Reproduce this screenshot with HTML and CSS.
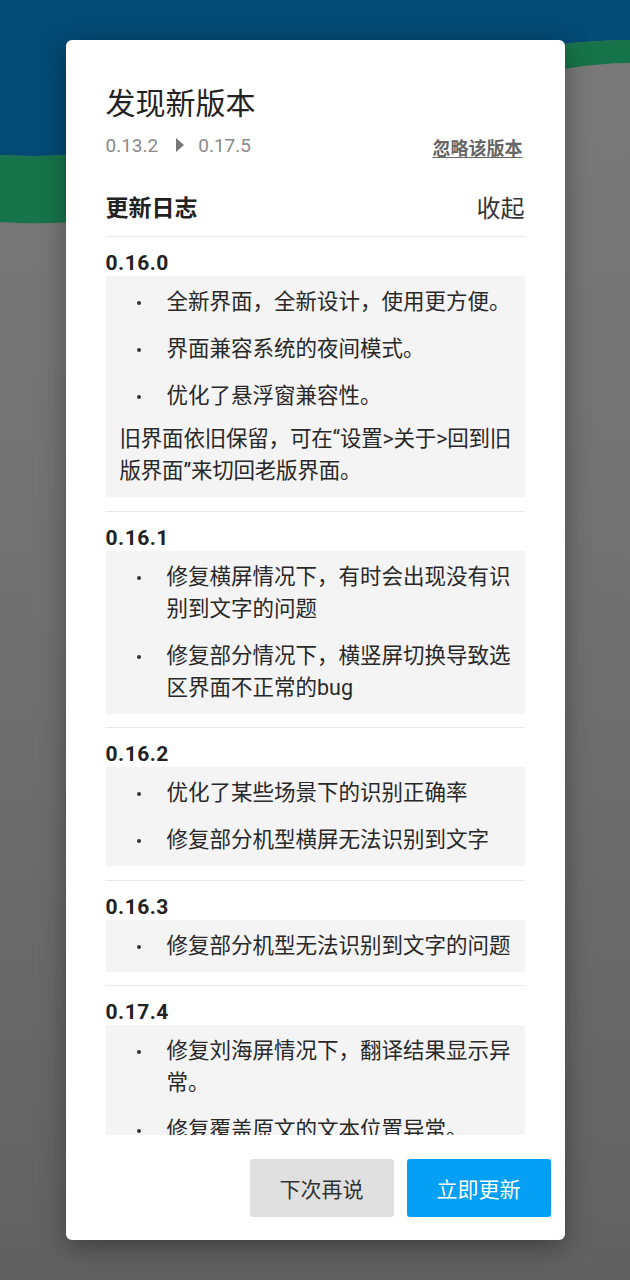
FILE: index.html
```html
<!DOCTYPE html>
<html lang="zh-CN">
<head>
    <meta charset="UTF-8">
    <meta name="viewport" content="width=device-width, initial-scale=1.0">
    <title>发现新版本</title>
    <link rel="stylesheet" href="styles.css">
</head>
<body>
    <!-- app background behind the dim overlay -->
    <svg class="backdrop" width="630" height="260" viewBox="0 0 630 260">
        <path d="M0 0 H630 V40 C420 40 250 168 0 155 Z" fill="#034a74"/>
        <path d="M0 155 C250 168 420 40 630 40 V63 C430 63 260 240 0 222 Z" fill="#17744a"/>
    </svg>

    <div class="dialog">
        <div class="dialog-head">
            <h1>发现新版本</h1>
            <div class="version-row">
                <span class="version">0.13.2</span>
                <span class="arrow"></span>
                <span class="version">0.17.5</span>
                <a class="ignore" href="#">忽略该版本</a>
            </div>
            <div class="log-head">
                <span class="log-title">更新日志</span>
                <span class="log-toggle">收起</span>
            </div>
        </div>

        <div class="log-list">
            <div class="entry">
                <div class="entry-version">0.16.0</div>
                <div class="entry-box">
                    <ul>
                        <li>全新界面，全新设计，使用更方便。</li>
                        <li>界面兼容系统的夜间模式。</li>
                        <li>优化了悬浮窗兼容性。</li>
                    </ul>
                    <p>旧界面依旧保留，可在“设置&gt;关于&gt;回到旧<br>版界面”来切回老版界面。</p>
                </div>
            </div>
            <div class="entry">
                <div class="entry-version">0.16.1</div>
                <div class="entry-box">
                    <ul>
                        <li>修复横屏情况下，有时会出现没有识别到文字的问题</li>
                        <li>修复部分情况下，横竖屏切换导致选区界面不正常的bug</li>
                    </ul>
                </div>
            </div>
            <div class="entry">
                <div class="entry-version">0.16.2</div>
                <div class="entry-box">
                    <ul>
                        <li>优化了某些场景下的识别正确率</li>
                        <li>修复部分机型横屏无法识别到文字</li>
                    </ul>
                </div>
            </div>
            <div class="entry">
                <div class="entry-version">0.16.3</div>
                <div class="entry-box">
                    <ul>
                        <li>修复部分机型无法识别到文字的问题</li>
                    </ul>
                </div>
            </div>
            <div class="entry">
                <div class="entry-version">0.17.4</div>
                <div class="entry-box">
                    <ul>
                        <li>修复刘海屏情况下，翻译结果显示异常。</li>
                        <li>修复覆盖原文的文本位置异常。</li>
                    </ul>
                </div>
            </div>
        </div>

        <div class="dialog-foot">
            <button class="btn btn-later">下次再说</button>
            <button class="btn btn-update">立即更新</button>
        </div>
    </div>
</body>
</html>
```

FILE: styles.css
```css
body {
    margin: 0;
    height: 1280px;
    overflow: hidden;
    position: relative;
    font-family: Roboto, "Noto Sans CJK SC", sans-serif;
    color: #333;
    text-spacing-trim: space-all;
    background: linear-gradient(180deg, #7a7a7a 0%, #707070 50%, #616161 100%);
}

.backdrop {
    position: absolute;
    top: 0;
    left: 0;
    z-index: 0;
}

.dialog {
    position: relative;
    z-index: 1;
    width: 499px;
    height: 1200px;
    margin: 40px auto 0;
    background: #fff;
    border-radius: 6px;
    box-shadow: 0 8px 26px rgba(0, 0, 0, 0.35);
    display: flex;
    flex-direction: column;
    overflow: hidden;
}

.dialog-head {
    padding: 44px 40px 0;
}

h1 {
    margin: 0;
    font-size: 30px;
    line-height: 40px;
    font-weight: 400;
    color: #222;
}

.version-row {
    display: flex;
    align-items: center;
    height: 30px;
    margin-top: 6px;
}

.version {
    font-size: 19px;
    color: #8a8a8a;
}

.arrow {
    width: 0;
    height: 0;
    border-left: 8px solid #777;
    border-top: 7px solid transparent;
    border-bottom: 7px solid transparent;
    margin: 0 14px 0 18px;
}

.ignore {
    margin-left: auto;
    margin-right: 2px;
    margin-top: 4px;
    font-size: 18px;
    font-weight: 700;
    color: #666;
    text-decoration: underline;
    text-underline-offset: 2px;
}

.log-head {
    display: flex;
    justify-content: space-between;
    align-items: center;
    height: 32px;
    margin-top: 30px;
    padding-bottom: 14px;
}

.log-title {
    font-size: 23px;
    font-weight: 700;
    color: #222;
}

.log-toggle {
    font-size: 24px;
    color: #333;
}

.log-list {
    flex: 1;
    overflow: hidden;
    padding: 0 40px;
}

.entry {
    border-top: 1px solid #e8e8e8;
    padding: 13px 0 13.5px;
}

.entry-version {
    font-size: 21px;
    line-height: 26px;
    font-weight: 700;
    color: #222;
    letter-spacing: 0.5px;
}

.entry-box {
    background: #f4f4f4;
    padding: 10px 4px 10px 14px;
    font-size: 21.5px;
    line-height: 32px;
    color: #282828;
}

.entry-box ul {
    list-style: none;
    margin: 0;
    padding: 0;
}

.entry-box li {
    display: flex;
}

.entry-box li + li {
    margin-top: 15px;
}

.entry-box li::before {
    content: "";
    flex: none;
    width: 4px;
    height: 4px;
    border-radius: 50%;
    background: #333;
    margin: 15px 26px 0 17px;
}

.entry-box p {
    margin: 11px 0 0;
    white-space: nowrap;
    letter-spacing: -0.2px;
}

.dialog-foot {
    display: flex;
    justify-content: flex-end;
    gap: 13px;
    padding: 24px 14px 23px;
}

.btn {
    width: 144px;
    height: 58px;
    border: none;
    border-radius: 3px;
    font-family: Roboto, "Noto Sans CJK SC", sans-serif;
    font-size: 21px;
    cursor: pointer;
}

.btn-later {
    background: #e0e0e0;
    color: #333;
}

.btn-update {
    background: #03a0f5;
    color: #fff;
}
```
